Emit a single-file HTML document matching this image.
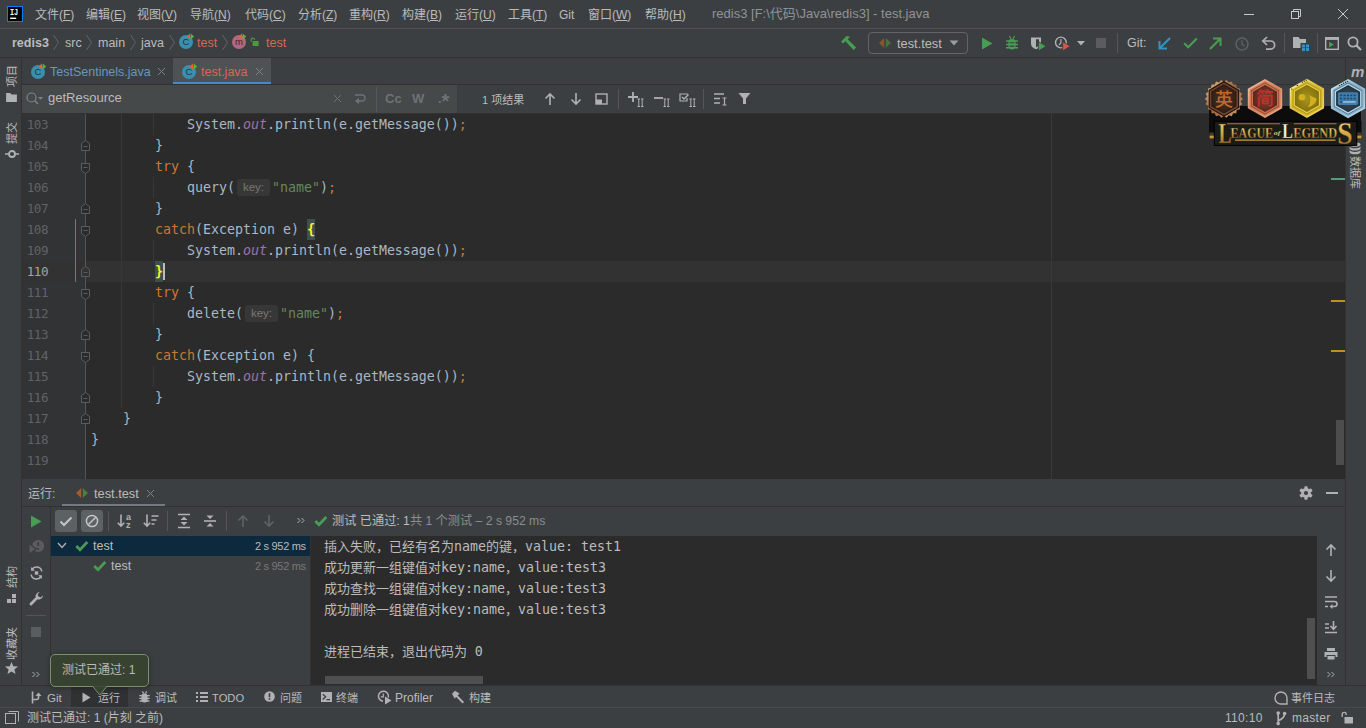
<!DOCTYPE html>
<html lang="zh-CN">
<head>
<meta charset="utf-8">
<title>redis3 - test.java</title>
<style>
*{box-sizing:border-box;margin:0;padding:0}
html,body{width:1366px;height:728px;overflow:hidden;background:#3c3f41}
body{position:relative;font-family:"Liberation Sans","Noto Sans CJK SC",sans-serif;font-size:12px;color:#bbbbbb;line-height:1}
.abs{position:absolute}
.t{position:absolute;white-space:nowrap;line-height:16px;height:16px}
svg{position:absolute;overflow:visible}
/* menu */
#menubar{left:0;top:0;width:1366px;height:28px;background:#3c3f41}
#menubar .t{top:7px;font-size:12px;color:#bbbbbb}
#menuline{left:0;top:28px;width:1366px;height:1px;background:#515151}
/* nav */
#navbar{left:0;top:29px;width:1366px;height:28px;background:#3c3f41}
#navline{left:0;top:57px;width:1366px;height:1px;background:#323232}
#navbar .t{top:6px;font-size:12.5px}
/* left stripe */
#lstripe{left:0;top:58px;width:21px;height:627px;background:#3c3f41}
#lstripeline{left:21px;top:58px;width:1px;height:627px;background:#323232}
/* right stripe */
#rstripe{left:1346px;top:58px;width:20px;height:627px;background:#3c3f41}
#rstripeline{left:1345px;top:58px;width:1px;height:627px;background:#323232}
/* tabs */
#tabbar{left:22px;top:58px;width:1323px;height:27px;background:#3c3f41}
#tabline{left:22px;top:84px;width:1323px;height:1px;background:#323232}
/* search */
#searchbar{left:22px;top:85px;width:1323px;height:28px;background:#3c3f41}
#searchfield{left:22px;top:85px;width:435px;height:28px;background:#45494a}
#searchline{left:22px;top:113px;width:1323px;height:1px;background:#323232}
/* editor */
#editor{left:22px;top:114px;width:1323px;height:365px;background:#2b2b2b;overflow:hidden}
#gutter{left:0;top:0;width:64px;height:365px;background:#313335}
.ln{position:absolute;left:0;width:26px;text-align:right;font-family:"DejaVu Sans Mono",monospace;font-size:12.6px;letter-spacing:-0.5px;color:#606366;height:21px;line-height:21px}
.cl{position:absolute;left:69px;height:21px;line-height:21px;font-family:"DejaVu Sans Mono",monospace;font-size:13.29px;color:#a9b7c6;white-space:pre}
.k{color:#cc7832}.s{color:#6a8759}.f{color:#9876aa;font-style:italic}
.hint{display:inline-block;font-family:"Liberation Sans",sans-serif;font-size:11.5px;color:#787878;background:#373737;border-radius:3px;height:17px;line-height:16px;padding:0;width:33px;text-align:center;vertical-align:1px;margin:0 2px 0 2px}
.bm{background:#3b514d;color:#ffef28;font-weight:bold;display:inline-block;height:21px;line-height:21px;vertical-align:top}

/* run tool window */
#runhdr{left:22px;top:479px;width:1323px;height:28px;background:#3c3f41}
#runhdrline{left:22px;top:506px;width:1323px;height:1px;background:#323232}
#runtb{left:22px;top:508px;width:1323px;height:28px;background:#3c3f41}
#runleftline{left:50px;top:507px;width:1px;height:178px;background:#323232}
#tree{left:51px;top:536px;width:259px;height:149px;background:#3c3f41}
#treediv{left:310px;top:536px;width:1px;height:149px;background:#323232}
#console{left:311px;top:536px;width:1006px;height:149px;background:#2b2b2b;overflow:hidden}
.co{position:absolute;left:13px;margin-top:0px;height:21px;line-height:21px;font-family:"DejaVu Sans Mono","Noto Sans CJK SC",monospace;font-size:13px;color:#bbbbbb;white-space:pre}
.co b{font-weight:normal;font-size:13.29px}
#bstripe{left:0;top:686px;width:1366px;height:21px;background:#3c3f41}
#bstripe>div.w{position:absolute;left:0;top:1px;width:1366px;height:20px}
#bstripeline{left:0;top:685px;width:1366px;height:1px;background:#323232}
#statusline{left:0;top:707px;width:1366px;height:1px;background:#484a4b}
#status{left:0;top:708px;width:1366px;height:20px;background:#3c3f41}

.vl{position:absolute;white-space:nowrap;font-size:11px;line-height:14px;height:14px;color:#bbbbbb;transform-origin:0 0;transform:rotate(-90deg)}
.vr{position:absolute;white-space:nowrap;font-size:11px;line-height:14px;height:14px;color:#bbbbbb;transform-origin:0 0;transform:rotate(90deg)}
</style>
</head>
<body>
<!-- ===== MENU BAR ===== -->
<div id="menubar" class="abs">
  <svg style="left:7px;top:6px" width="16" height="16" viewBox="0 0 16 16"><rect x="0" y="0" width="16" height="16" fill="#087cfa"/><rect x="1" y="1" width="14" height="14" fill="#000"/><rect x="3.2" y="11.6" width="6" height="1.4" fill="#fff"/><text x="3" y="9.4" font-family="Liberation Mono,monospace" font-weight="bold" font-size="8.6" textLength="8.2" lengthAdjust="spacingAndGlyphs" fill="#fff">IJ</text></svg>
  <span class="t" style="left:35px">文件(<u>F</u>)</span>
  <span class="t" style="left:86px">编辑(<u>E</u>)</span>
  <span class="t" style="left:137px">视图(<u>V</u>)</span>
  <span class="t" style="left:190px">导航(<u>N</u>)</span>
  <span class="t" style="left:245px">代码(<u>C</u>)</span>
  <span class="t" style="left:298px">分析(<u>Z</u>)</span>
  <span class="t" style="left:349px">重构(<u>R</u>)</span>
  <span class="t" style="left:402px">构建(<u>B</u>)</span>
  <span class="t" style="left:455px">运行(<u>U</u>)</span>
  <span class="t" style="left:508px">工具(<u>T</u>)</span>
  <span class="t" style="left:559px">Git</span>
  <span class="t" style="left:588px">窗口(<u>W</u>)</span>
  <span class="t" style="left:645px">帮助(<u>H</u>)</span>
  <span class="t" style="left:712px;top:6px;color:#909395;font-size:13px">redis3 [F:\代码\Java\redis3] - test.java</span>
  <div class="abs" style="left:1244px;top:14px;width:10px;height:1px;background:#c8c8c8"></div>
  <svg style="left:1291px;top:9px" width="10" height="10" viewBox="0 0 10 10"><path d="M2.5 2.5 V0.5 H9.5 V7.5 H7.5" fill="none" stroke="#c8c8c8" stroke-width="1"/><rect x="0.5" y="2.5" width="7" height="7" fill="none" stroke="#c8c8c8" stroke-width="1"/></svg>
  <svg style="left:1338px;top:9px" width="10" height="10" viewBox="0 0 10 10"><path d="M0 0 L10 10 M10 0 L0 10" stroke="#c8c8c8" stroke-width="1"/></svg>
</div>
<div id="menuline" class="abs"></div>

<!-- ===== NAV BAR ===== -->
<div id="navbar" class="abs">
  <span class="t" style="left:12px;font-weight:bold;color:#bbbbbb">redis3</span>
  <svg class="chev" style="left:51.5px;top:5px" width="8" height="17" viewBox="0 0 8 17"><path d="M1.5 1 L6.5 8.5 L1.5 16" fill="none" stroke="#616466" stroke-width="1"/></svg>
  <span class="t" style="left:65px">src</span>
  <svg class="chev" style="left:84.5px;top:5px" width="8" height="17" viewBox="0 0 8 17"><path d="M1.5 1 L6.5 8.5 L1.5 16" fill="none" stroke="#616466" stroke-width="1"/></svg>
  <span class="t" style="left:98px">main</span>
  <svg class="chev" style="left:128.5px;top:5px" width="8" height="17" viewBox="0 0 8 17"><path d="M1.5 1 L6.5 8.5 L1.5 16" fill="none" stroke="#616466" stroke-width="1"/></svg>
  <span class="t" style="left:141px">java</span>
  <svg class="chev" style="left:167.5px;top:5px" width="8" height="17" viewBox="0 0 8 17"><path d="M1.5 1 L6.5 8.5 L1.5 16" fill="none" stroke="#616466" stroke-width="1"/></svg>
  <svg style="left:178px;top:3px" width="18" height="18" viewBox="0 0 18 18"><circle cx="8" cy="10" r="7" fill="#3a8fad"/><text x="8" y="13.4" text-anchor="middle" font-family="Liberation Sans,sans-serif" font-size="9.5" fill="#23343b">C</text><path d="M8.6 4.6 L12 1.6 L12 7.6 Z" fill="#e8622c"/><path d="M12.6 1.4 L16.2 4.4 L12.6 7.4 Z" fill="#5fb336"/></svg>
  <span class="t" style="left:197px;color:#d4695a">test</span>
  <svg class="chev" style="left:220.5px;top:5px" width="8" height="17" viewBox="0 0 8 17"><path d="M1.5 1 L6.5 8.5 L1.5 16" fill="none" stroke="#616466" stroke-width="1"/></svg>
  <svg style="left:231px;top:3px" width="18" height="18" viewBox="0 0 18 18"><circle cx="8" cy="10" r="7" fill="#b4667c"/><text x="8" y="13" text-anchor="middle" font-family="Liberation Sans,sans-serif" font-size="9.5" fill="#3b2329">m</text><path d="M7.6 4.6 L11 1.6 L11 7.6 Z" fill="#e8622c"/><path d="M11.6 1.4 L15.2 4.4 L11.6 7.4 Z" fill="#5fb336"/></svg>
  <svg style="left:250px;top:8px" width="10" height="10" viewBox="0 0 10 10"><path d="M1.2 4.5 V2.6 A1.6 1.6 0 0 1 4.4 2.6 V3" fill="none" stroke="#4f9a3f" stroke-width="1.2"/><rect x="2.6" y="4" width="6" height="5" fill="#4f9a3f"/></svg>
  <span class="t" style="left:266px;color:#d4695a">test</span>
  <!-- toolbar right -->
  <svg style="left:840px;top:6px" width="17" height="17" viewBox="0 0 17 17"><path d="M1.1 6.7 L3.3 8.4 L5.3 6 L13.6 15 L16.1 12.6 L7.7 4.3 L10.1 1.8 L6.4 0.9 Z" fill="#499c54"/></svg>
  <div class="abs" style="left:868px;top:3px;width:100px;height:22px;border:1px solid #646464;border-radius:4px"></div>
  <svg style="left:879px;top:9px" width="12" height="10" viewBox="0 0 12 10"><path d="M0 5 L5.2 0 V10 Z" fill="#8f5030"/><path d="M12 5 L6.8 0 V10 Z" fill="#4a6e3c"/></svg>
  <span class="t" style="left:897px;top:7px;font-size:12.8px">test.test</span>
  <svg style="left:949px;top:11px" width="10" height="6" viewBox="0 0 10 6"><path d="M0.5 0.5 H9.5 L5 5.5 Z" fill="#9a9da0"/></svg>
  <svg style="left:981px;top:8px" width="12" height="13" viewBox="0 0 12 13"><path d="M1 0.5 L11.5 6.5 L1 12.5 Z" fill="#499c54"/></svg>
  <svg style="left:1005px;top:6px" width="14" height="15" viewBox="0 0 14 15"><rect x="3.4" y="4" width="7.2" height="10.4" rx="3.4" fill="#499c54"/><path d="M4.4 1 L6 3.8 M9.6 1 L8 3.8" stroke="#499c54" stroke-width="1.3" fill="none"/><path d="M1 6 H13 M1 9.4 H13 M1 12.8 H13" stroke="#499c54" stroke-width="1.5" fill="none"/><path d="M4.6 7.7 H9.4 M4.6 11.1 H9.4" stroke="#3c3f41" stroke-width="1.1"/></svg>
  <svg style="left:1030px;top:7px" width="17" height="16" viewBox="0 0 17 16"><path d="M1 1.4 H11 V7.5 Q11 11.6 6 13.2 Q1 11.6 1 7.5 Z" fill="#afb1b3"/><path d="M6 3.2 H9 V7.5 Q9 10 6 11.4 Z" fill="#3c3f41"/><path d="M8.4 5.6 L16.2 10.2 L8.4 15 Z" fill="#499c54" stroke="#3c3f41" stroke-width="0.9"/></svg>
  <svg style="left:1054px;top:6px" width="17" height="17" viewBox="0 0 17 17"><circle cx="6.9" cy="7.5" r="5.4" fill="none" stroke="#afb1b3" stroke-width="1.4"/><path d="M6.9 4 V7.8 L5 10" fill="none" stroke="#afb1b3" stroke-width="1.2"/><path d="M8.6 6.6 L16.4 11.2 L8.6 16 Z" fill="#d9534f" stroke="#3c3f41" stroke-width="0.9"/></svg>
  <svg style="left:1077px;top:12px" width="8" height="5" viewBox="0 0 8 5"><path d="M0 0 H8 L4 4.5 Z" fill="#afb1b3"/></svg>
  <div class="abs" style="left:1096px;top:9px;width:10px;height:10px;background:#5a5c5d"></div>
  <div class="abs" style="left:1117px;top:4px;width:1px;height:20px;background:#555555"></div>
  <span class="t" style="left:1127px;top:6px;font-size:12.5px">Git:</span>
  <svg style="left:1158px;top:8px" width="13" height="13" viewBox="0 0 13 13"><path d="M12 1 L2 11 M1.5 4 V11.5 H9" fill="none" stroke="#3592c4" stroke-width="2"/></svg>
  <svg style="left:1183px;top:8px" width="15" height="12" viewBox="0 0 15 12"><path d="M1.2 6.2 L5.2 10.2 L13.8 1.4" fill="none" stroke="#499c54" stroke-width="2.2"/></svg>
  <svg style="left:1209px;top:8px" width="13" height="13" viewBox="0 0 13 13"><path d="M1 12 L11 2 M4 1.5 H11.5 V9" fill="none" stroke="#499c54" stroke-width="2"/></svg>
  <svg style="left:1235px;top:8px" width="14" height="14" viewBox="0 0 14 14"><circle cx="7" cy="7" r="6" fill="none" stroke="#5e6163" stroke-width="1.5"/><path d="M7 3.5 V7.3 L9.6 9" fill="none" stroke="#5e6163" stroke-width="1.4"/></svg>
  <svg style="left:1261px;top:7px" width="15" height="15" viewBox="0 0 15 15"><path d="M2.5 5 H9.5 A4 4 0 0 1 9.5 13.2 H5" fill="none" stroke="#afb1b3" stroke-width="1.7"/><path d="M6 1 L1.8 5 L6 9" fill="none" stroke="#afb1b3" stroke-width="1.7"/></svg>
  <div class="abs" style="left:1284px;top:4px;width:1px;height:20px;background:#555555"></div>
  <svg style="left:1293px;top:8px" width="16" height="14" viewBox="0 0 16 14"><path d="M0 0 H5.5 L7 2 H13 V6 H7.5 V11 H0 Z" fill="#afb1b3"/><rect x="9" y="7.5" width="3" height="3" fill="#3592c4"/><rect x="13" y="7.5" width="3" height="3" fill="#3592c4"/><rect x="9" y="11" width="3" height="3" fill="#3592c4"/><rect x="13" y="11" width="3" height="3" fill="#3592c4"/></svg>
  <div class="abs" style="left:1317px;top:4px;width:1px;height:20px;background:#555555"></div>
  <svg style="left:1325px;top:8px" width="14" height="13" viewBox="0 0 14 13"><rect x="0.7" y="0.7" width="12.6" height="11.6" fill="none" stroke="#afb1b3" stroke-width="1.4"/><rect x="0.7" y="0.7" width="12.6" height="2.2" fill="#afb1b3"/><path d="M4 4.8 L9 7.6 L4 10.4 Z" fill="#499c54"/></svg>
  <svg style="left:1347px;top:7px" width="15" height="15" viewBox="0 0 15 15"><circle cx="6" cy="6" r="4.6" fill="none" stroke="#afb1b3" stroke-width="1.8"/><path d="M9.4 9.4 L14 14" stroke="#afb1b3" stroke-width="2.2"/></svg>
</div>
<div id="navline" class="abs"></div>

<!-- ===== STRIPES ===== -->
<div id="lstripe" class="abs"></div><div id="lstripeline" class="abs"></div>
<div id="rstripe" class="abs"></div><div id="rstripeline" class="abs"></div>

<!-- ===== LEFT STRIPE CONTENT ===== -->
<span class="vl" style="left:5px;top:87px">项目</span>
<svg style="left:6px;top:93px" width="11" height="9" viewBox="0 0 12 10"><path d="M0 0 H4.5 L6 1.8 H12 V10 H0 Z" fill="#afb1b3"/></svg>
<span class="vl" style="left:5px;top:144px">提交</span>
<svg style="left:5px;top:149px" width="14" height="10" viewBox="0 0 14 10"><circle cx="7" cy="5" r="3" fill="none" stroke="#afb1b3" stroke-width="1.8"/><path d="M0 5 H4 M10 5 H14" stroke="#afb1b3" stroke-width="1.6"/></svg>
<span class="vl" style="left:5px;top:588px">结构</span>
<svg style="left:7px;top:594px" width="9" height="9" viewBox="0 0 9 9"><rect x="5" y="0" width="4" height="4" fill="#afb1b3"/><rect x="0" y="5" width="4" height="4" fill="#afb1b3"/><rect x="5" y="5" width="4" height="4" fill="#afb1b3"/></svg>
<span class="vl" style="left:5px;top:660px">收藏夹</span>
<svg style="left:5px;top:662px" width="13" height="12" viewBox="0 0 13 12"><path d="M6.5 0 L8.3 4.2 L13 4.6 L9.4 7.6 L10.5 12 L6.5 9.6 L2.5 12 L3.6 7.6 L0 4.6 L4.7 4.2 Z" fill="#afb1b3"/></svg>

<!-- ===== RIGHT STRIPE CONTENT ===== -->
<span class="t" style="left:1351px;top:64px;font-size:15px;font-weight:bold;font-style:italic;color:#afb1b3">m</span>
<svg style="left:1349px;top:142px" width="12" height="13" viewBox="0 0 12 13"><ellipse cx="6" cy="2.5" rx="5.5" ry="2.3" fill="#afb1b3"/><path d="M0.5 4 A5.5 2.3 0 0 0 11.5 4 V6.3 A5.5 2.3 0 0 1 0.5 6.3 Z M0.5 7.6 A5.5 2.3 0 0 0 11.5 7.6 V10 A5.5 2.3 0 0 1 0.5 10 Z" fill="#afb1b3"/></svg>
<span class="vr" style="left:1362px;top:156px">数据库</span>

<!-- ===== TABS ===== -->
<div id="tabbar" class="abs">
  <svg style="left:8px;top:4px" width="18" height="18" viewBox="0 0 18 18"><circle cx="8" cy="10" r="7" fill="#3a8fad"/><text x="8" y="13.4" text-anchor="middle" font-family="Liberation Sans,sans-serif" font-size="9.5" fill="#23343b">C</text><path d="M8.6 4.6 L12 1.6 L12 7.6 Z" fill="#e8622c"/><path d="M12.6 1.4 L16.2 4.4 L12.6 7.4 Z" fill="#5fb336"/></svg>
  <span class="t" style="left:28px;top:6px;font-size:12.5px;color:#6897bb">TestSentinels.java</span>
  <svg style="left:135px;top:9px" width="9" height="9" viewBox="0 0 9 9"><path d="M1 1 L8 8 M8 1 L1 8" fill="none" stroke="#7e8183" stroke-width="1"/></svg>
  <div class="abs" style="left:151px;top:0;width:98px;height:27px;background:#4e5254"></div>
  <div class="abs" style="left:151px;top:24px;width:98px;height:3px;background:#4a88c7"></div>
  <svg style="left:159px;top:4px" width="18" height="18" viewBox="0 0 18 18"><circle cx="8" cy="10" r="7" fill="#3a8fad"/><text x="8" y="13.4" text-anchor="middle" font-family="Liberation Sans,sans-serif" font-size="9.5" fill="#23343b">C</text><path d="M8.6 4.6 L12 1.6 L12 7.6 Z" fill="#e8622c"/><path d="M12.6 1.4 L16.2 4.4 L12.6 7.4 Z" fill="#5fb336"/></svg>
  <span class="t" style="left:179px;top:6px;font-size:12.5px;color:#d4695a">test.java</span>
  <svg style="left:233px;top:9px" width="9" height="9" viewBox="0 0 9 9"><path d="M1 1 L8 8 M8 1 L1 8" fill="none" stroke="#7e8183" stroke-width="1"/></svg>
</div><div id="tabline" class="abs"></div>

<!-- ===== SEARCH ===== -->
<div id="searchbar" class="abs"></div><div id="searchfield" class="abs"></div>
<div class="abs" style="left:376px;top:87px;width:1px;height:25px;background:#53575a"></div>
<div id="searchitems" class="abs" style="left:0;top:85px;width:1366px;height:28px">
  <svg style="left:25px;top:6px" width="20" height="16" viewBox="0 0 20 16"><circle cx="6.5" cy="6.5" r="4.5" fill="none" stroke="#7f8487" stroke-width="1.2"/><path d="M9.8 9.8 L13 13" stroke="#7f8487" stroke-width="1.4"/><path d="M13 6 L18 6 L15.5 8.8 Z" fill="#7f8487"/></svg>
  <span class="t" style="left:48px;top:5px;font-size:13px;color:#bbbbbb">getResource</span>
  <svg style="left:333px;top:9px" width="9" height="9" viewBox="0 0 9 9"><path d="M1 1 L8 8 M8 1 L1 8" fill="none" stroke="#6e7274" stroke-width="1"/></svg>
  <svg style="left:353px;top:8px" width="14" height="12" viewBox="0 0 14 12"><path d="M2 2 H9 A3 3 0 0 1 9 8 H3" fill="none" stroke="#6e7274" stroke-width="1.3"/><path d="M6 4.8 L2 8 L6 11.2 Z" fill="#6e7274"/></svg>
  <span class="t" style="left:385px;top:6px;font-size:13px;font-weight:bold;color:#6e7274">Cc</span>
  <span class="t" style="left:412px;top:6px;font-size:13px;font-weight:bold;color:#6e7274">W</span>
  <span class="t" style="left:438px;top:6px;font-size:13px;font-weight:bold;color:#6e7274">.</span><span class="t" style="left:441.5px;top:7.5px;font-size:20px;font-weight:bold;color:#6e7274">*</span>
  <span class="t" style="left:482px;top:7px;font-size:11px;color:#bbbbbb">1 项结果</span>
  <svg style="left:543px;top:7px" width="14" height="14" viewBox="0 0 14 14"><path d="M7 13 V2 M2.5 6.5 L7 2 L11.5 6.5" fill="none" stroke="#afb1b3" stroke-width="1.6"/></svg>
  <svg style="left:569px;top:7px" width="14" height="14" viewBox="0 0 14 14"><path d="M7 1 V12 M2.5 7.5 L7 12 L11.5 7.5" fill="none" stroke="#afb1b3" stroke-width="1.6"/></svg>
  <svg style="left:595px;top:8px" width="13" height="12" viewBox="0 0 13 12"><rect x="1" y="1" width="11" height="10" fill="none" stroke="#afb1b3" stroke-width="1.4"/><rect x="1" y="6.5" width="6" height="4.5" fill="#afb1b3"/></svg>
  <div class="abs" style="left:618px;top:4px;width:1px;height:20px;background:#555555"></div>
  <svg style="left:627px;top:6px" width="18" height="18" viewBox="0 0 18 18"><path d="M1 6 H11 M6 1 V11" stroke="#afb1b3" stroke-width="1.8" fill="none"/><path d="M10.5 8 h2.5 m1 0 h2.5 M10.5 15.5 h2.5 m1 0 h2.5 M11.8 8 v7.5 M15.2 8 v7.5" stroke="#afb1b3" stroke-width="1" fill="none"/></svg>
  <svg style="left:653px;top:6px" width="18" height="18" viewBox="0 0 18 18"><path d="M1 7 H10" stroke="#afb1b3" stroke-width="1.8" fill="none"/><path d="M10.5 8 h2.5 m1 0 h2.5 M10.5 15.5 h2.5 m1 0 h2.5 M11.8 8 v7.5 M15.2 8 v7.5" stroke="#afb1b3" stroke-width="1" fill="none"/></svg>
  <svg style="left:679px;top:6px" width="18" height="18" viewBox="0 0 18 18"><path d="M9 3 H1 V10 H8 V7" stroke="#afb1b3" stroke-width="1.2" fill="none"/><path d="M3 6 L5 8 L9.5 3.5" stroke="#afb1b3" stroke-width="1.4" fill="none"/><path d="M10.5 8 h2.5 m1 0 h2.5 M10.5 15.5 h2.5 m1 0 h2.5 M11.8 8 v7.5 M15.2 8 v7.5" stroke="#afb1b3" stroke-width="1" fill="none"/></svg>
  <div class="abs" style="left:703px;top:4px;width:1px;height:20px;background:#555555"></div>
  <svg style="left:713px;top:7px" width="16" height="14" viewBox="0 0 16 14"><path d="M1 2 H11 M1 6.5 H7 M1 11 H7" stroke="#afb1b3" stroke-width="1.7" fill="none"/><path d="M9.5 6 h4 M9.5 13 h4 M11.5 6 v7" stroke="#afb1b3" stroke-width="1.2" fill="none"/></svg>
  <svg style="left:738px;top:7px" width="13" height="13" viewBox="0 0 13 13"><path d="M0.5 1 H12.5 L8 6.5 V12 H5 V6.5 Z" fill="#afb1b3"/></svg>
</div><div id="searchline" class="abs"></div>

<!-- ===== EDITOR ===== -->
<div id="editor" class="abs">
  <div id="gutter" class="abs"></div>
  <div class="abs" style="left:0;top:147px;width:1323px;height:21px;background:#323232"></div>
  <div class="abs" style="left:63px;top:0;width:1px;height:365px;background:#555555"></div>
  <div class="abs" style="left:1029px;top:0;width:1px;height:365px;background:#393939"></div>
  <div class="abs" style="left:99px;top:0;width:1px;height:294px;background:#373737"></div>
  <div class="abs" style="left:131px;top:0px;width:1px;height:21px;background:#373737"></div>
  <div class="abs" style="left:131px;top:63px;width:1px;height:21px;background:#373737"></div>
  <div class="abs" style="left:131px;top:126px;width:1px;height:21px;background:#373737"></div>
  <div class="abs" style="left:131px;top:189px;width:1px;height:21px;background:#373737"></div>
  <div class="abs" style="left:131px;top:252px;width:1px;height:21px;background:#373737"></div>
  <div class="abs" style="left:53px;top:105px;width:1px;height:63px;background:#5a8480"></div>
  <svg style="left:59px;top:26px" width="9" height="11" viewBox="0 0 9 11"><path d="M0.5 10.5 V3.5 L4.5 0.5 L8.5 3.5 V10.5 Z" fill="#2b2b2b" stroke="#5a5d5f" stroke-width="1"/><path d="M2.5 6.5 H6.5" stroke="#5a5d5f" stroke-width="1"/></svg>
  <svg style="left:59px;top:89px" width="9" height="11" viewBox="0 0 9 11"><path d="M0.5 10.5 V3.5 L4.5 0.5 L8.5 3.5 V10.5 Z" fill="#2b2b2b" stroke="#5a5d5f" stroke-width="1"/><path d="M2.5 6.5 H6.5" stroke="#5a5d5f" stroke-width="1"/></svg>
  <svg style="left:59px;top:152px" width="9" height="11" viewBox="0 0 9 11"><path d="M0.5 10.5 V3.5 L4.5 0.5 L8.5 3.5 V10.5 Z" fill="#323232" stroke="#5a5d5f" stroke-width="1"/><path d="M2.5 6.5 H6.5" stroke="#5a5d5f" stroke-width="1"/></svg>
  <svg style="left:59px;top:215px" width="9" height="11" viewBox="0 0 9 11"><path d="M0.5 10.5 V3.5 L4.5 0.5 L8.5 3.5 V10.5 Z" fill="#2b2b2b" stroke="#5a5d5f" stroke-width="1"/><path d="M2.5 6.5 H6.5" stroke="#5a5d5f" stroke-width="1"/></svg>
  <svg style="left:59px;top:278px" width="9" height="11" viewBox="0 0 9 11"><path d="M0.5 10.5 V3.5 L4.5 0.5 L8.5 3.5 V10.5 Z" fill="#2b2b2b" stroke="#5a5d5f" stroke-width="1"/><path d="M2.5 6.5 H6.5" stroke="#5a5d5f" stroke-width="1"/></svg>
  <svg style="left:59px;top:299px" width="9" height="11" viewBox="0 0 9 11"><path d="M0.5 10.5 V3.5 L4.5 0.5 L8.5 3.5 V10.5 Z" fill="#2b2b2b" stroke="#5a5d5f" stroke-width="1"/><path d="M2.5 6.5 H6.5" stroke="#5a5d5f" stroke-width="1"/></svg>
  <svg style="left:59px;top:49px" width="9" height="11" viewBox="0 0 9 11"><path d="M0.5 0.5 H8.5 V7.5 L4.5 10.5 L0.5 7.5 Z" fill="#2b2b2b" stroke="#5a5d5f" stroke-width="1"/><path d="M2.5 4.5 H6.5" stroke="#5a5d5f" stroke-width="1"/></svg>
  <svg style="left:59px;top:112px" width="9" height="11" viewBox="0 0 9 11"><path d="M0.5 0.5 H8.5 V7.5 L4.5 10.5 L0.5 7.5 Z" fill="#2b2b2b" stroke="#5a5d5f" stroke-width="1"/><path d="M2.5 4.5 H6.5" stroke="#5a5d5f" stroke-width="1"/></svg>
  <svg style="left:59px;top:175px" width="9" height="11" viewBox="0 0 9 11"><path d="M0.5 0.5 H8.5 V7.5 L4.5 10.5 L0.5 7.5 Z" fill="#2b2b2b" stroke="#5a5d5f" stroke-width="1"/><path d="M2.5 4.5 H6.5" stroke="#5a5d5f" stroke-width="1"/></svg>
  <svg style="left:59px;top:238px" width="9" height="11" viewBox="0 0 9 11"><path d="M0.5 0.5 H8.5 V7.5 L4.5 10.5 L0.5 7.5 Z" fill="#2b2b2b" stroke="#5a5d5f" stroke-width="1"/><path d="M2.5 4.5 H6.5" stroke="#5a5d5f" stroke-width="1"/></svg>
  <div class="ln" style="top:0px;color:#606366">103</div>
  <div class="cl" style="top:0px">            System.<span class="f">out</span>.println(e.getMessage())<span class="k">;</span></div>
  <div class="ln" style="top:21px;color:#606366">104</div>
  <div class="cl" style="top:21px">        }</div>
  <div class="ln" style="top:42px;color:#606366">105</div>
  <div class="cl" style="top:42px">        <span class="k">try</span> {</div>
  <div class="ln" style="top:63px;color:#606366">106</div>
  <div class="cl" style="top:63px">            query(<span class="hint">key:</span><span class="s">"name"</span>)<span class="k">;</span></div>
  <div class="ln" style="top:84px;color:#606366">107</div>
  <div class="cl" style="top:84px">        }</div>
  <div class="ln" style="top:105px;color:#606366">108</div>
  <div class="cl" style="top:105px">        <span class="k">catch</span>(Exception e) <span class="bm">{</span></div>
  <div class="ln" style="top:126px;color:#606366">109</div>
  <div class="cl" style="top:126px">            System.<span class="f">out</span>.println(e.getMessage())<span class="k">;</span></div>
  <div class="ln" style="top:147px;color:#a4a3a3">110</div>
  <div class="cl" style="top:147px">        <span class="bm">}</span></div>
  <div class="ln" style="top:168px;color:#606366">111</div>
  <div class="cl" style="top:168px">        <span class="k">try</span> {</div>
  <div class="ln" style="top:189px;color:#606366">112</div>
  <div class="cl" style="top:189px">            delete(<span class="hint">key:</span><span class="s">"name"</span>)<span class="k">;</span></div>
  <div class="ln" style="top:210px;color:#606366">113</div>
  <div class="cl" style="top:210px">        }</div>
  <div class="ln" style="top:231px;color:#606366">114</div>
  <div class="cl" style="top:231px">        <span class="k">catch</span>(Exception e) {</div>
  <div class="ln" style="top:252px;color:#606366">115</div>
  <div class="cl" style="top:252px">            System.<span class="f">out</span>.println(e.getMessage())<span class="k">;</span></div>
  <div class="ln" style="top:273px;color:#606366">116</div>
  <div class="cl" style="top:273px">        }</div>
  <div class="ln" style="top:294px;color:#606366">117</div>
  <div class="cl" style="top:294px">    }</div>
  <div class="ln" style="top:315px;color:#606366">118</div>
  <div class="cl" style="top:315px">}</div>
  <div class="ln" style="top:336px;color:#606366">119</div>
  <div class="abs" style="left:141px;top:149px;width:2px;height:17px;background:#bbbbbb"></div>
  <div class="abs" style="left:1314px;top:306px;width:8px;height:45px;background:#4d4d4d"></div>
  <div class="abs" style="left:1309px;top:64px;width:14px;height:2px;background:#5a9a74"></div>
  <div class="abs" style="left:1309px;top:186px;width:14px;height:2px;background:#be9117"></div>
  <div class="abs" style="left:1309px;top:236px;width:14px;height:2px;background:#be9117"></div>
</div>

<!-- ===== RUN TOOL WINDOW ===== -->
<div id="runhdr" class="abs">
  <span class="t" style="left:6px;top:7px;font-size:12px">运行:</span>
  <svg style="left:54px;top:9px" width="12" height="10" viewBox="0 0 12 10"><path d="M0 5 L5.2 0 V10 Z" fill="#a65a30"/><path d="M12 5 L6.8 0 V10 Z" fill="#4b7f3f"/></svg>
  <span class="t" style="left:72px;top:7px;font-size:12.8px">test.test</span>
  <svg style="left:124px;top:10px" width="9" height="9" viewBox="0 0 9 9"><path d="M1 1 L8 8 M8 1 L1 8" fill="none" stroke="#7e8183" stroke-width="1"/></svg>
  <div class="abs" style="left:40px;top:25px;width:103px;height:3px;background:#747a80"></div>
  <svg style="left:1277px;top:7px" width="14" height="14" viewBox="0 0 14 14"><g fill="#afb1b3"><circle cx="7" cy="7" r="4.9"/><rect x="5.4" y="0.2" width="3.2" height="13.6" rx="0.8"/><rect x="5.4" y="0.2" width="3.2" height="13.6" rx="0.8" transform="rotate(60 7 7)"/><rect x="5.4" y="0.2" width="3.2" height="13.6" rx="0.8" transform="rotate(120 7 7)"/></g><circle cx="7" cy="7" r="2.1" fill="#3c3f41"/></svg>
  <div class="abs" style="left:1304px;top:13px;width:12px;height:2px;background:#afb1b3"></div>
</div>
<div id="runhdrline" class="abs"></div>
<div id="runtb" class="abs">
  <svg style="left:8px;top:7px" width="12" height="13" viewBox="0 0 12 13"><path d="M1 0.5 L11.5 6.5 L1 12.5 Z" fill="#499c54"/></svg>
  <div class="abs" style="left:33px;top:2px;width:22px;height:22px;background:#5c6164;border-radius:3px"></div>
  <svg style="left:37px;top:7px" width="14" height="12" viewBox="0 0 14 12"><path d="M1.5 6.5 L5 10 L12.5 2.5" fill="none" stroke="#c3c5c7" stroke-width="2"/></svg>
  <div class="abs" style="left:59px;top:2px;width:22px;height:22px;background:#5c6164;border-radius:3px"></div>
  <svg style="left:63px;top:6px" width="14" height="14" viewBox="0 0 14 14"><circle cx="7" cy="7" r="5.6" fill="none" stroke="#c3c5c7" stroke-width="1.5"/><path d="M3.2 10.8 L10.8 3.2" stroke="#c3c5c7" stroke-width="1.5"/></svg>
  <div class="abs" style="left:86px;top:3px;width:1px;height:20px;background:#555555"></div>
  <svg style="left:95px;top:5px" width="16" height="16" viewBox="0 0 16 16"><path d="M4 1.5 V13 M0.8 9.8 L4 13 L7.2 9.8" fill="none" stroke="#afb1b3" stroke-width="1.6"/><text x="9" y="7" font-family="Liberation Sans,sans-serif" font-size="9" font-weight="bold" fill="#afb1b3">a</text><text x="9" y="14.5" font-family="Liberation Sans,sans-serif" font-size="9" font-weight="bold" fill="#afb1b3">z</text></svg>
  <svg style="left:121px;top:5px" width="16" height="16" viewBox="0 0 16 16"><path d="M4 1.5 V13 M0.8 9.8 L4 13 L7.2 9.8" fill="none" stroke="#afb1b3" stroke-width="1.6"/><path d="M8.5 3 H15.5 M8.5 7 H13.5 M8.5 11 H11.5" stroke="#afb1b3" stroke-width="1.7"/></svg>
  <div class="abs" style="left:145px;top:3px;width:1px;height:20px;background:#555555"></div>
  <svg style="left:155px;top:5px" width="14" height="16" viewBox="0 0 14 16"><path d="M1 1.5 H13 M1 14.5 H13" stroke="#afb1b3" stroke-width="1.6"/><path d="M7 3.5 L10.5 7 H3.5 Z M7 12.5 L10.5 9 H3.5 Z" fill="#afb1b3"/></svg>
  <svg style="left:181px;top:5px" width="14" height="16" viewBox="0 0 14 16"><path d="M1 8 H13" stroke="#afb1b3" stroke-width="1.6"/><path d="M7 6 L10.5 2.5 H3.5 Z M7 10 L10.5 13.5 H3.5 Z" fill="#afb1b3"/></svg>
  <div class="abs" style="left:204px;top:3px;width:1px;height:20px;background:#555555"></div>
  <svg style="left:214px;top:6px" width="14" height="14" viewBox="0 0 14 14"><path d="M7 13 V2 M2.5 6.5 L7 2 L11.5 6.5" fill="none" stroke="#5f6365" stroke-width="1.6"/></svg>
  <svg style="left:240px;top:6px" width="14" height="14" viewBox="0 0 14 14"><path d="M7 1 V12 M2.5 7.5 L7 12 L11.5 7.5" fill="none" stroke="#5f6365" stroke-width="1.6"/></svg>
  <svg style="left:275px;top:9px" width="8" height="7" viewBox="0 0 8 7"><path d="M0.5 1 L3 3.5 L0.5 6 M4.5 1 L7 3.5 L4.5 6" fill="none" stroke="#afb1b3" stroke-width="1"/></svg>
  <svg style="left:292px;top:7px" width="14" height="12" viewBox="0 0 14 12"><path d="M1.3 6 L5 9.7 L12.3 2" fill="none" stroke="#499c54" stroke-width="2.7"/></svg>
  <span class="t" style="left:310px;top:5px;font-size:12.2px;color:#bbbbbb">测试 已通过: 1<span style="color:#8c8c8c">共 1 个测试 – 2 s 952 ms</span></span>
</div>
<div id="runleftline" class="abs"></div>
<div id="runleft" class="abs" style="left:22px;top:536px;width:28px;height:150px">
  <svg style="left:0px;top:0px" width="28" height="22" viewBox="0 0 28 22"><circle cx="16.2" cy="10" r="6" fill="#5a5c5d"/><path d="M7 7.6 L14 12.9 L7 18.2 Z" fill="#5a5c5d" stroke="#3c3f41" stroke-width="1.2"/><rect x="15.1" y="6.2" width="2" height="3.6" fill="#3c3f41"/><rect x="14.4" y="12.1" width="2.7" height="1.5" fill="#3c3f41"/></svg>
  <svg style="left:7px;top:29px" width="15" height="16" viewBox="0 0 15 16"><path d="M2.2 9.5 A5.3 5.3 0 0 0 12 11.5 M12.8 6.5 A5.3 5.3 0 0 0 3 4.5" fill="none" stroke="#afb1b3" stroke-width="1.5"/><path d="M12.9 14 V10.2 H9.2 Z M2.1 2 V5.8 H5.8 Z" fill="#afb1b3"/><rect x="5.8" y="6.3" width="3.4" height="3.4" fill="#afb1b3"/></svg>
  <svg style="left:7px;top:55px" width="15" height="15" viewBox="0 0 15 15"><path d="M14 4.2 A4.2 4.2 0 0 1 8.6 8.2 L3 13.9 A1.4 1.4 0 0 1 1 11.9 L6.7 6.3 A4.2 4.2 0 0 1 10.8 1 L8.6 3.3 L9.4 5.6 L11.7 6.4 Z" fill="#afb1b3"/></svg>
  <div class="abs" style="left:4px;top:79px;width:20px;height:1px;background:#555555"></div>
  <div class="abs" style="left:9px;top:91px;width:10px;height:10px;background:#5a5d5f"></div>
  <svg style="left:10px;top:135px" width="8" height="7" viewBox="0 0 8 7"><path d="M0.5 1 L3 3.5 L0.5 6 M4.5 1 L7 3.5 L4.5 6" fill="none" stroke="#afb1b3" stroke-width="1"/></svg>
</div>
<div id="tree" class="abs">
  <div class="abs" style="left:0;top:0;width:259px;height:20px;background:#0d293e"></div>
  <svg style="left:6px;top:6px" width="10" height="7" viewBox="0 0 10 7"><path d="M1 1 L5 5.5 L9 1" fill="none" stroke="#afb1b3" stroke-width="1.3"/></svg>
  <svg style="left:24px;top:4px" width="14" height="12" viewBox="0 0 14 12"><path d="M1.3 6 L5 9.7 L12.3 2" fill="none" stroke="#499c54" stroke-width="2.7"/></svg>
  <span class="t" style="left:42px;top:2px;font-size:12.5px;color:#bbbbbb">test</span>
  <span class="t" style="left:204px;top:2px;font-size:11px;color:#bbbbbb;letter-spacing:-0.3px">2 s 952 ms</span>
  <svg style="left:42px;top:24px" width="14" height="12" viewBox="0 0 14 12"><path d="M1.3 6 L5 9.7 L12.3 2" fill="none" stroke="#499c54" stroke-width="2.7"/></svg>
  <span class="t" style="left:60px;top:22px;font-size:12.5px;color:#bbbbbb">test</span>
  <span class="t" style="left:204px;top:22px;font-size:11px;color:#787878;letter-spacing:-0.3px">2 s 952 ms</span>
</div>
<div id="treediv" class="abs"></div>
<div id="console" class="abs">
  <div class="co" style="top:0">插入失败，已经有名为<b>name</b>的键，<b>value: test1</b></div>
  <div class="co" style="top:21px">成功更新一组键值对<b>key:name</b>，<b>value:test3</b></div>
  <div class="co" style="top:42px">成功查找一组键值对<b>key:name</b>，<b>value:test3</b></div>
  <div class="co" style="top:63px">成功删除一组键值对<b>key:name</b>，<b>value:test3</b></div>
  <div class="co" style="top:105px">进程已结束，退出代码为 <b>0</b></div>
  <div class="abs" style="left:14px;top:140px;width:158px;height:8px;background:#4f4f4f"></div>
  <div class="abs" style="left:996px;top:82px;width:8px;height:61px;background:#4f4f4f"></div>
</div>
<div id="conright" class="abs" style="left:1317px;top:536px;width:28px;height:150px">
  <svg style="left:7px;top:7px" width="14" height="14" viewBox="0 0 14 14"><path d="M7 13 V2 M2.5 6.5 L7 2 L11.5 6.5" fill="none" stroke="#afb1b3" stroke-width="1.6"/></svg>
  <svg style="left:7px;top:33px" width="14" height="14" viewBox="0 0 14 14"><path d="M7 1 V12 M2.5 7.5 L7 12 L11.5 7.5" fill="none" stroke="#afb1b3" stroke-width="1.6"/></svg>
  <svg style="left:7px;top:59px" width="14" height="14" viewBox="0 0 14 14"><path d="M1 2 H13 M1 6.5 H10.5 A2.5 2.5 0 0 1 10.5 11.5 H7 M1 11.5 H4" fill="none" stroke="#afb1b3" stroke-width="1.6"/><path d="M8.5 9 L5.5 11.5 L8.5 14 Z" fill="#afb1b3"/></svg>
  <svg style="left:7px;top:84px" width="14" height="14" viewBox="0 0 14 14"><path d="M1 12.5 H13 M1 4 H5 M1 8 H5" stroke="#afb1b3" stroke-width="1.6"/><path d="M9.5 1 V9 M6.5 6 L9.5 9.3 L12.5 6" fill="none" stroke="#afb1b3" stroke-width="1.6"/></svg>
  <svg style="left:7px;top:111px" width="14" height="14" viewBox="0 0 14 14"><rect x="3" y="1" width="8" height="3" fill="#afb1b3"/><rect x="0.5" y="5" width="13" height="5" fill="#afb1b3"/><rect x="3" y="8.5" width="8" height="4.5" fill="#afb1b3" stroke="#3c3f41" stroke-width="1"/></svg>
  <svg style="left:10px;top:135px" width="8" height="7" viewBox="0 0 8 7"><path d="M0.5 1 L3 3.5 L0.5 6 M4.5 1 L7 3.5 L4.5 6" fill="none" stroke="#afb1b3" stroke-width="1"/></svg>
</div>

<!-- ===== BOTTOM STRIPE ===== -->
<div id="bstripeline" class="abs"></div>
<div id="bstripe" class="abs">
<div class="w">
  <svg style="left:30px;top:4px" width="12" height="13" viewBox="0 0 12 13"><path d="M2.5 0.5 V12.5 M2.5 8.5 H6.5 Q8.5 8.5 8.5 6.5 V4" fill="none" stroke="#afb1b3" stroke-width="1.6"/><path d="M5.5 5 L8.5 1.5 L11.5 5 Z" fill="#afb1b3"/></svg>
  <span class="t" style="left:47px;top:3px;font-size:11.5px">Git</span>
  <div class="abs" style="left:71px;top:0;width:57px;height:20px;background:#2f3133"></div>
  <svg style="left:82px;top:5px" width="9" height="11" viewBox="0 0 9 11"><path d="M0.5 0.5 L8.5 5.5 L0.5 10.5 Z" fill="#afb1b3"/></svg>
  <span class="t" style="left:98px;top:3px;font-size:11px">运行</span>
  <svg style="left:139px;top:4px" width="11" height="12" viewBox="0 0 11 12"><rect x="2.4" y="2.6" width="6.2" height="9" rx="3" fill="#afb1b3"/><path d="M3.4 0.4 L4.6 2.6 M7.6 0.4 L6.4 2.6" stroke="#afb1b3" stroke-width="1.2" fill="none"/><path d="M0.3 4.6 H10.7 M0.3 7.3 H10.7 M0.6 10 H10.4" stroke="#afb1b3" stroke-width="1.3" fill="none"/></svg>
  <span class="t" style="left:155px;top:3px;font-size:11px">调试</span>
  <svg style="left:196px;top:5px" width="12" height="10" viewBox="0 0 12 10"><path d="M0 1 H2 M4 1 H12 M0 5 H2 M4 5 H12 M0 9 H2 M4 9 H12" stroke="#afb1b3" stroke-width="1.8"/></svg>
  <span class="t" style="left:212px;top:3px;font-size:11.2px">TODO</span>
  <svg style="left:264px;top:4px" width="11" height="11" viewBox="0 0 11 11"><circle cx="5.5" cy="5.5" r="5.3" fill="#afb1b3"/><rect x="4.7" y="2.2" width="1.6" height="4" fill="#3c3f41"/><rect x="4.7" y="7.2" width="1.6" height="1.6" fill="#3c3f41"/></svg>
  <span class="t" style="left:280px;top:3px;font-size:11px">问题</span>
  <svg style="left:321px;top:5px" width="11" height="10" viewBox="0 0 11 10"><rect x="0" y="0" width="11" height="10" fill="#afb1b3"/><path d="M1.8 2.2 L4.6 4.8 L1.8 7.4" fill="none" stroke="#3c3f41" stroke-width="1.3"/><path d="M5.5 7.6 H9" stroke="#3c3f41" stroke-width="1.3"/></svg>
  <span class="t" style="left:336px;top:3px;font-size:11px">终端</span>
  <svg style="left:377px;top:3px" width="15" height="15" viewBox="0 0 15 15"><path d="M11.3 7.5 A5 5 0 1 0 6 11.2" fill="none" stroke="#afb1b3" stroke-width="1.5"/><path d="M6.3 3.5 V6.8 H3.8" fill="none" stroke="#afb1b3" stroke-width="1.2"/><path d="M8 6.5 L14.5 10.5 L8 14.5 Z" fill="#afb1b3"/></svg>
  <span class="t" style="left:395px;top:3px;font-size:12px">Profiler</span>
  <svg style="left:451px;top:3px" width="14" height="14" viewBox="0 0 14 14"><path d="M1 3.8 L4 0.8 L8.5 3.6 L6.6 5.6 L13 12 L11.6 13.4 L5.2 7 L3.6 8.4 Z" fill="#afb1b3"/></svg>
  <span class="t" style="left:469px;top:3px;font-size:11px">构建</span>
  <svg style="left:1274px;top:4px" width="14" height="14" viewBox="0 0 14 14"><path d="M13 7 A6 6 0 1 0 7 13 H13 Z" fill="none" stroke="#afb1b3" stroke-width="1.4"/></svg>
  <span class="t" style="left:1291px;top:3px;font-size:11px">事件日志</span>
</div>
</div>
<div id="statusline" class="abs"></div>
<div id="status" class="abs">
  <svg style="left:5px;top:3px" width="14" height="13" viewBox="0 0 14 13"><path d="M3.5 0.5 H13.5 V10.5" fill="none" stroke="#afb1b3" stroke-width="1"/><rect x="0.5" y="2.5" width="10" height="10" fill="none" stroke="#afb1b3" stroke-width="1"/></svg>
  <span class="t" style="left:27px;top:2px;font-size:12px">测试已通过: 1 (片刻 之前)</span>
  <span class="t" style="left:1225px;top:2px;font-size:12px;letter-spacing:0.3px">110:10</span>
  <svg style="left:1276px;top:3px" width="11" height="15" viewBox="0 0 11 15"><path d="M2.2 2 V12.5 M8.6 2.6 Q8.6 7.5 2.4 9.6" fill="none" stroke="#afb1b3" stroke-width="1.7"/><circle cx="2.2" cy="2" r="1.8" fill="#afb1b3"/><circle cx="8.6" cy="2.6" r="1.8" fill="#afb1b3"/><circle cx="2.2" cy="12.6" r="1.8" fill="#afb1b3"/></svg>
  <span class="t" style="left:1292px;top:2px;font-size:12px;letter-spacing:0.3px">master</span>
  <svg style="left:1341px;top:3px" width="13" height="13" viewBox="0 0 13 13"><path d="M1.2 6 V3.4 A2 2 0 0 1 5.2 3.4 V4" fill="none" stroke="#afb1b3" stroke-width="1.3"/><rect x="3.5" y="6" width="8.5" height="6.5" fill="#afb1b3"/></svg>
</div>

<!-- ===== TOOLTIP ===== -->
<div class="abs" style="left:50px;top:654px;width:99px;height:33px;background:#374230;border:1px solid #78906c;border-radius:5px;box-shadow:0 1px 5px rgba(0,0,0,0.35)"></div>
<svg style="left:92px;top:685px" width="16" height="11" viewBox="0 0 16 11"><path d="M0.8 1.5 L7.8 10 L14.8 1.5" fill="#374230" stroke="#78906c" stroke-width="1"/><rect x="1.6" y="0" width="12.4" height="1.6" fill="#374230"/></svg>
<span class="t" style="left:62px;top:662px;font-size:12px;color:#bbbbbb">测试已通过: 1</span>

<!-- ===== IME OVERLAY ===== -->
<svg id="lol" style="left:1200px;top:74px" width="166" height="76" viewBox="0 0 166 76">
<defs>
<linearGradient id="gold" x1="0" y1="0" x2="0" y2="1"><stop offset="0" stop-color="#fbeeb4"/><stop offset="0.45" stop-color="#e0b04a"/><stop offset="1" stop-color="#8b5a1e"/></linearGradient>
<linearGradient id="h1o" x1="0" y1="0" x2="1" y2="1"><stop offset="0" stop-color="#e6bd8c"/><stop offset="0.5" stop-color="#9a623a"/><stop offset="1" stop-color="#d9a675"/></linearGradient>
<linearGradient id="h2o" x1="0" y1="0" x2="1" y2="1"><stop offset="0" stop-color="#f6c8b0"/><stop offset="0.5" stop-color="#d88866"/><stop offset="1" stop-color="#eeb090"/></linearGradient>
<linearGradient id="h3o" x1="0" y1="0" x2="1" y2="1"><stop offset="0" stop-color="#fff6c0"/><stop offset="0.5" stop-color="#dcbc30"/><stop offset="1" stop-color="#f4e070"/></linearGradient>
<linearGradient id="h4o" x1="0" y1="0" x2="1" y2="1"><stop offset="0" stop-color="#e2f0f8"/><stop offset="0.5" stop-color="#8ab6d0"/><stop offset="1" stop-color="#c4e2f2"/></linearGradient>
<radialGradient id="h2i"><stop offset="0" stop-color="#86402e"/><stop offset="1" stop-color="#5a281e"/></radialGradient>
<radialGradient id="h3i"><stop offset="0" stop-color="#a8941c"/><stop offset="1" stop-color="#84720f"/></radialGradient>
<radialGradient id="h4i"><stop offset="0" stop-color="#3c505c"/><stop offset="1" stop-color="#24323a"/></radialGradient>
<radialGradient id="h1i"><stop offset="0" stop-color="#55301f"/><stop offset="1" stop-color="#332017"/></radialGradient>
</defs>
<rect x="9" y="32" width="152" height="16" fill="#0c0c0c"/>
<rect x="9" y="47" width="5.5" height="18" fill="#0c0c0c"/><rect x="156.5" y="47" width="5" height="18" fill="#0c0c0c"/>
<rect x="9.5" y="58.5" width="5" height="3" fill="#3a3a38"/><rect x="9.5" y="61.5" width="5" height="3" fill="#c9962c"/>
<rect x="156.5" y="58.5" width="5" height="3" fill="#3a3a38"/><rect x="156.5" y="61.5" width="5" height="3" fill="#c9962c"/>
<rect x="14.3" y="47.4" width="142.5" height="24" fill="#1b1b18" stroke="#000" stroke-width="1"/>
<path d="M27 49.8 H80 M94 49.8 H136.5" stroke="#a87c2c" stroke-width="1"/>
<path d="M35 66.2 H135.5" stroke="#c9a23c" stroke-width="1.2"/>
<text x="18.6" y="68.6" font-size="30" textLength="13" lengthAdjust="spacingAndGlyphs" font-family="Liberation Serif,serif" font-weight="bold" fill="url(#gold)" stroke="#3a2508" stroke-width="0.3">L</text>
<text x="30.6" y="63.8" font-size="13.8" textLength="42.5" lengthAdjust="spacingAndGlyphs" font-family="Liberation Serif,serif" font-weight="bold" fill="url(#gold)" stroke="#3a2508" stroke-width="0.3">EAGUE</text>
<text x="73.8" y="61.3" font-size="7" font-style="italic" textLength="6.6" lengthAdjust="spacingAndGlyphs" font-family="Liberation Serif,serif" font-weight="bold" fill="#e8c468">of</text>
<text x="82.2" y="63.8" font-size="21" textLength="10.6" lengthAdjust="spacingAndGlyphs" font-family="Liberation Serif,serif" font-weight="bold" fill="#fdf6dc" stroke="#3a2508" stroke-width="0.3">L</text>
<text x="93.2" y="63.8" font-size="13.8" textLength="44" lengthAdjust="spacingAndGlyphs" font-family="Liberation Serif,serif" font-weight="bold" fill="url(#gold)" stroke="#3a2508" stroke-width="0.3">EGEND</text>
<text x="137.2" y="69.6" font-size="31.5" textLength="15.4" lengthAdjust="spacingAndGlyphs" font-family="Liberation Serif,serif" font-weight="bold" fill="url(#gold)" stroke="#3a2508" stroke-width="0.3">S</text>
<polygon points="42.9,24.9 40.7,27.3 42.1,30.3 39.4,32.0 39.9,35.2 36.7,36.0 36.3,39.3 33.1,39.2 31.8,42.2 28.7,41.2 26.6,43.7 23.9,41.9 21.2,43.7 19.1,41.2 16.0,42.2 14.7,39.2 11.5,39.3 11.1,36.0 7.9,35.2 8.4,32.0 5.7,30.3 7.1,27.3 4.9,24.9 7.1,22.5 5.7,19.5 8.4,17.8 7.9,14.6 11.1,13.8 11.5,10.5 14.7,10.6 16.0,7.6 19.1,8.6 21.2,6.1 23.9,7.9 26.6,6.1 28.7,8.6 31.8,7.6 33.1,10.6 36.3,10.5 36.7,13.8 39.9,14.6 39.4,17.8 42.1,19.5 40.7,22.5" fill="url(#h1o)"/>
<polygon points="23.9,7.1 8.7,16.0 8.7,33.8 23.9,42.7 39.1,33.8 39.1,16.0" fill="#1c100a"/>
<polygon points="23.9,8.4 9.7,16.7 9.7,33.2 23.9,41.4 38.1,33.2 38.1,16.7" fill="#6e4630"/>
<polygon points="23.9,10.3 11.3,17.6 11.3,32.2 23.9,39.5 36.5,32.2 36.5,17.6" fill="#2a1810"/>
<polygon points="23.9,11.3 12.1,18.1 12.1,31.7 23.9,38.5 35.7,31.7 35.7,18.1" fill="url(#h1i)"/>
<text x="23.90000000000009" y="31.500000000000007" text-anchor="middle" font-family="Noto Sans CJK SC,sans-serif" font-weight="500" font-size="18" fill="#bd6a2c">英</text>
<polygon points="65.0,4.9 47.8,14.7 47.8,34.3 65.0,44.1 82.2,34.3 82.2,14.7" fill="url(#h2o)"/><polygon points="65.0,7.0 49.6,15.8 49.6,33.2 65.0,42.0 80.4,33.3 80.4,15.8" fill="#cf7a56"/><polygon points="65.0,8.6 51.0,16.6 51.0,32.5 65.0,40.4 79.0,32.5 79.0,16.5" fill="#8a4430"/><polygon points="65.0,9.3 51.6,16.9 51.6,32.1 65.0,39.7 78.4,32.1 78.4,16.9" fill="#c87250"/><polygon points="65.0,10.9 53.0,17.7 53.0,31.3 65.0,38.1 77.0,31.3 77.0,17.7" fill="url(#h2i)"/>
<text x="65" y="31.1" text-anchor="middle" font-family="Noto Sans CJK SC,sans-serif" font-weight="500" font-size="18" fill="#c4302c">简</text>
<polygon points="106.9,4.8 89.7,14.6 89.7,34.2 106.9,44.0 124.1,34.2 124.1,14.6" fill="url(#h3o)"/><polygon points="106.9,6.9 91.5,15.7 91.5,33.2 106.9,41.9 122.3,33.2 122.3,15.7" fill="#d2b220"/><polygon points="106.9,8.5 92.9,16.5 92.9,32.4 106.9,40.3 120.9,32.4 120.9,16.5" fill="#a48c14"/><polygon points="106.9,9.2 93.5,16.8 93.5,32.0 106.9,39.6 120.3,32.0 120.3,16.8" fill="#e6cc48"/><polygon points="106.9,10.8 94.9,17.6 94.9,31.2 106.9,38.0 118.9,31.2 118.9,17.6" fill="url(#h3i)"/>
<circle cx="102.0" cy="23.2" r="3.3" fill="#d4b020"/>
<path d="M109.3 21.3 L116.8 24.7 Q115.9 31.0 108.0 33.3 Q111.9 27.0 109.3 21.3 Z" fill="#d4b020"/>
<circle cx="91.7" cy="15.0" r="0.6" fill="#111"/>
<circle cx="97.3" cy="11.4" r="0.6" fill="#111"/>
<circle cx="102.3" cy="8.2" r="0.6" fill="#111"/>
<circle cx="104.3" cy="7.2" r="0.6" fill="#111"/>
<circle cx="106.3" cy="6.2" r="0.6" fill="#111"/>
<polygon points="148.1,5.0 130.9,14.8 130.9,34.4 148.1,44.2 165.3,34.4 165.3,14.8" fill="url(#h4o)"/><polygon points="148.1,7.1 132.7,15.8 132.7,33.3 148.1,42.1 163.5,33.4 163.5,15.8" fill="#7eaac6"/><polygon points="148.1,8.7 134.1,16.6 134.1,32.5 148.1,40.5 162.1,32.6 162.1,16.6" fill="#4a6a7c"/><polygon points="148.1,9.4 134.7,17.0 134.7,32.2 148.1,39.8 161.5,32.2 161.5,17.0" fill="#b8d8ea"/><polygon points="148.1,11.0 136.1,17.8 136.1,31.4 148.1,38.2 160.1,31.4 160.1,17.8" fill="url(#h4i)"/>
<rect x="137.9" y="18.3" width="20.2" height="12.6" rx="1.4" fill="#3f7eb0"/>
<rect x="140.1" y="20.6" width="2" height="1.6" fill="#27435a"/><rect x="143.5" y="20.6" width="2" height="1.6" fill="#27435a"/><rect x="146.9" y="20.6" width="2" height="1.6" fill="#27435a"/><rect x="150.3" y="20.6" width="2" height="1.6" fill="#27435a"/><rect x="153.7" y="20.6" width="2" height="1.6" fill="#27435a"/><rect x="140.1" y="23.8" width="2" height="1.6" fill="#27435a"/><rect x="143.5" y="23.8" width="2" height="1.6" fill="#27435a"/><rect x="146.9" y="23.8" width="2" height="1.6" fill="#27435a"/><rect x="150.3" y="23.8" width="2" height="1.6" fill="#27435a"/><rect x="153.7" y="23.8" width="2" height="1.6" fill="#27435a"/><rect x="140.1" y="27.2" width="2" height="1.4" fill="#27435a"/><rect x="143.1" y="27.2" width="12.4" height="1.5" fill="#9cc2da"/>
<circle cx="139.6" cy="11.5" r="0.6" fill="#111"/>
<circle cx="141.5" cy="10.3" r="0.6" fill="#111"/>
<circle cx="143.4" cy="9.2" r="0.6" fill="#111"/>
<circle cx="145.4" cy="8.2" r="0.6" fill="#111"/>
<circle cx="147.3" cy="7.3" r="0.6" fill="#111"/>
</svg>

</body>
</html>
